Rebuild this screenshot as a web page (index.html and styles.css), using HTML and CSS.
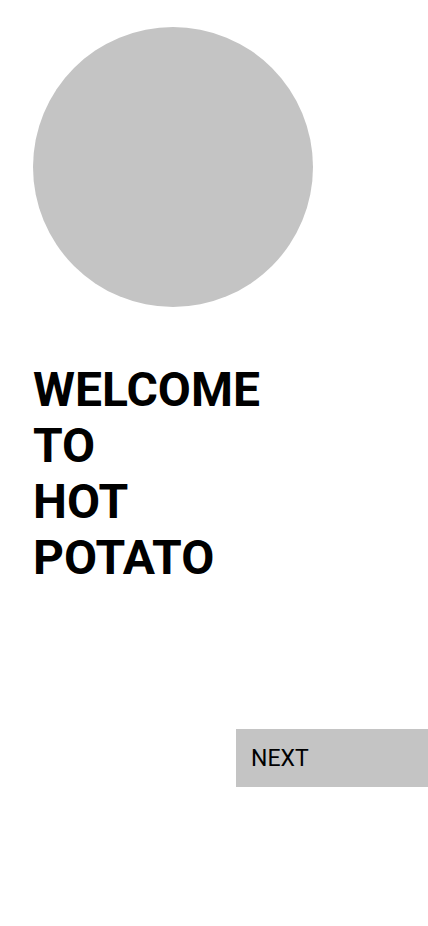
FILE: index.html
```html
<!DOCTYPE html>
<html lang="en">

<head>
    <meta charset="UTF-8">
    <meta name="viewport" content="width=device-width, initial-scale=1.0">
    <title>Hot Potato</title>
    <link rel="stylesheet" href="styles.css">
</head>

<body>
    <div class="welcome-screen">
        <!-- placeholder for the logo -->
        <div class="logo-circle"></div>
        <h1 class="welcome-title">WELCOME<br>TO<br>HOT<br>POTATO</h1>
        <button class="next-button">NEXT</button>
    </div>
</body>

</html>
```

FILE: styles.css
```css
/* Welcome screen styles */
body {
    margin: 0;
    background-color: white;
    font-family: Roboto, "Liberation Sans", sans-serif;
    color: black;
}

.welcome-screen {
    display: flex;
    flex-direction: column;
    min-height: 926px;
}

.logo-circle {
    width: 280px;
    height: 280px;
    margin: 27px 0 0 33px;
    border-radius: 50%;
    background-color: #c4c4c4;
}

.welcome-title {
    margin: 55px 0 0 33px;
    font-size: 48px;
    line-height: 56px;
    font-weight: 700;
}

.next-button {
    align-self: flex-end;
    width: 192px;
    height: 58px;
    margin-top: 143px;
    padding: 0 0 0 15px;
    border: none;
    background-color: #c4c4c4;
    font-family: inherit;
    font-size: 23px;
    color: black;
    text-align: left;
}
```
